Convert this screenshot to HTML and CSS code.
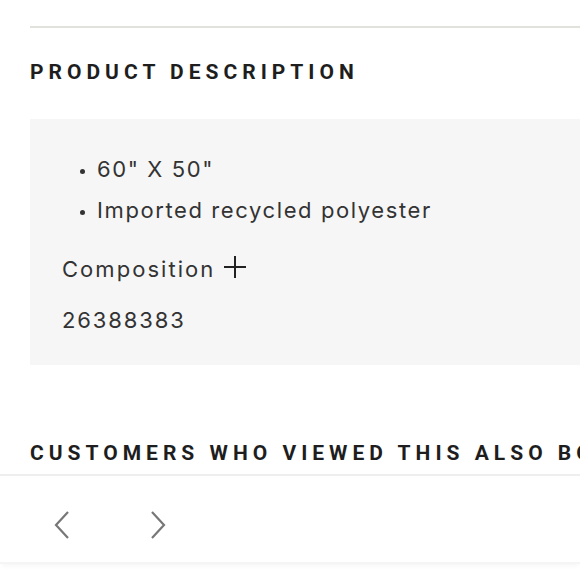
FILE: index.html
```html
<!DOCTYPE html>
<html>
<head>
<meta charset="utf-8">
<link rel="stylesheet" href="styles.css">
</head>
<body>
<div class="page">
  <div class="rule"></div>
  <h2 class="heading">PRODUCT DESCRIPTION</h2>
  <div class="desc">
    <ul class="bullets">
      <li>60" X 50"</li>
      <li>Imported recycled polyester</li>
    </ul>
    <div class="composition">Composition <span class="plus"><svg width="24" height="24" viewBox="0 0 24 24"><path d="M12 1v22M1 12h22" stroke="#222" stroke-width="2" fill="none"/></svg></span></div>
    <div class="sku">26388383</div>
  </div>
  <h2 class="heading heading2">CUSTOMERS WHO VIEWED THIS ALSO BOUGHT</h2>
</div>
<div class="carousel">
  <button class="arrow"><svg width="20" height="30" viewBox="0 0 20 30"><path d="M16 2L4 15l12 13" stroke="#777" stroke-width="2.2" fill="none"/></svg></button>
  <button class="arrow"><svg width="20" height="30" viewBox="0 0 20 30"><path d="M4 2l12 13L4 28" stroke="#777" stroke-width="2.2" fill="none"/></svg></button>
</div>
</body>
</html>
```

FILE: styles.css
```css
html, body {
  margin: 0;
  padding: 0;
  background: #fff;
  overflow: hidden;
}
body {
  font-family: Roboto, "Liberation Sans", sans-serif;
  color: #333;
  width: 580px;
  height: 580px;
}
.page {
  padding-left: 30px;
  padding-top: 26px;
  overflow: hidden;
}
.rule {
  height: 2px;
  background: #e2e2dd;
}
.heading {
  margin: 0;
  font-size: 21px;
  font-weight: 700;
  letter-spacing: 5px;
  color: #1e1e1e;
  line-height: 28px;
  white-space: nowrap;
  padding-top: 30px;
}
.desc {
  margin-top: 33px;
  background: #f6f6f6;
  height: 246px;
  box-sizing: border-box;
  padding: 30px 0 0 32px;
  font-family: Inter, Roboto, sans-serif;
  font-size: 22px;
}
.bullets {
  list-style: none;
  margin: 0;
  padding: 0;
}
.bullets li {
  position: relative;
  padding-left: 35px;
  letter-spacing: 1.6px;
  line-height: 41px;
}
.bullets li::before {
  content: "";
  position: absolute;
  left: 18px;
  top: 20px;
  width: 5px;
  height: 5px;
  border-radius: 50%;
  background: #333;
}
.composition {
  margin-top: 23px;
  letter-spacing: 2.05px;
  line-height: 30px;
  display: flex;
  align-items: center;
  gap: 8px;
}
.plus {
  display: flex;
  margin-top: -4px;
}
.sku {
  margin-top: 21px;
  letter-spacing: 1.9px;
  line-height: 30px;
}
.heading2 {
  padding-top: 74px;
}
.carousel {
  margin-top: 7px;
  border-top: 2px solid #eeeeee;
  height: 90px;
  box-sizing: border-box;
  display: flex;
  align-items: center;
  gap: 76px;
  padding-left: 52px;
  padding-top: 12px;
  box-shadow: 0 4px 4px -2px rgba(0,0,0,0.04);
  border-bottom: 2px solid #f5f5f5;
}
.arrow {
  border: 0;
  background: none;
  padding: 0;
  display: flex;
}
```
